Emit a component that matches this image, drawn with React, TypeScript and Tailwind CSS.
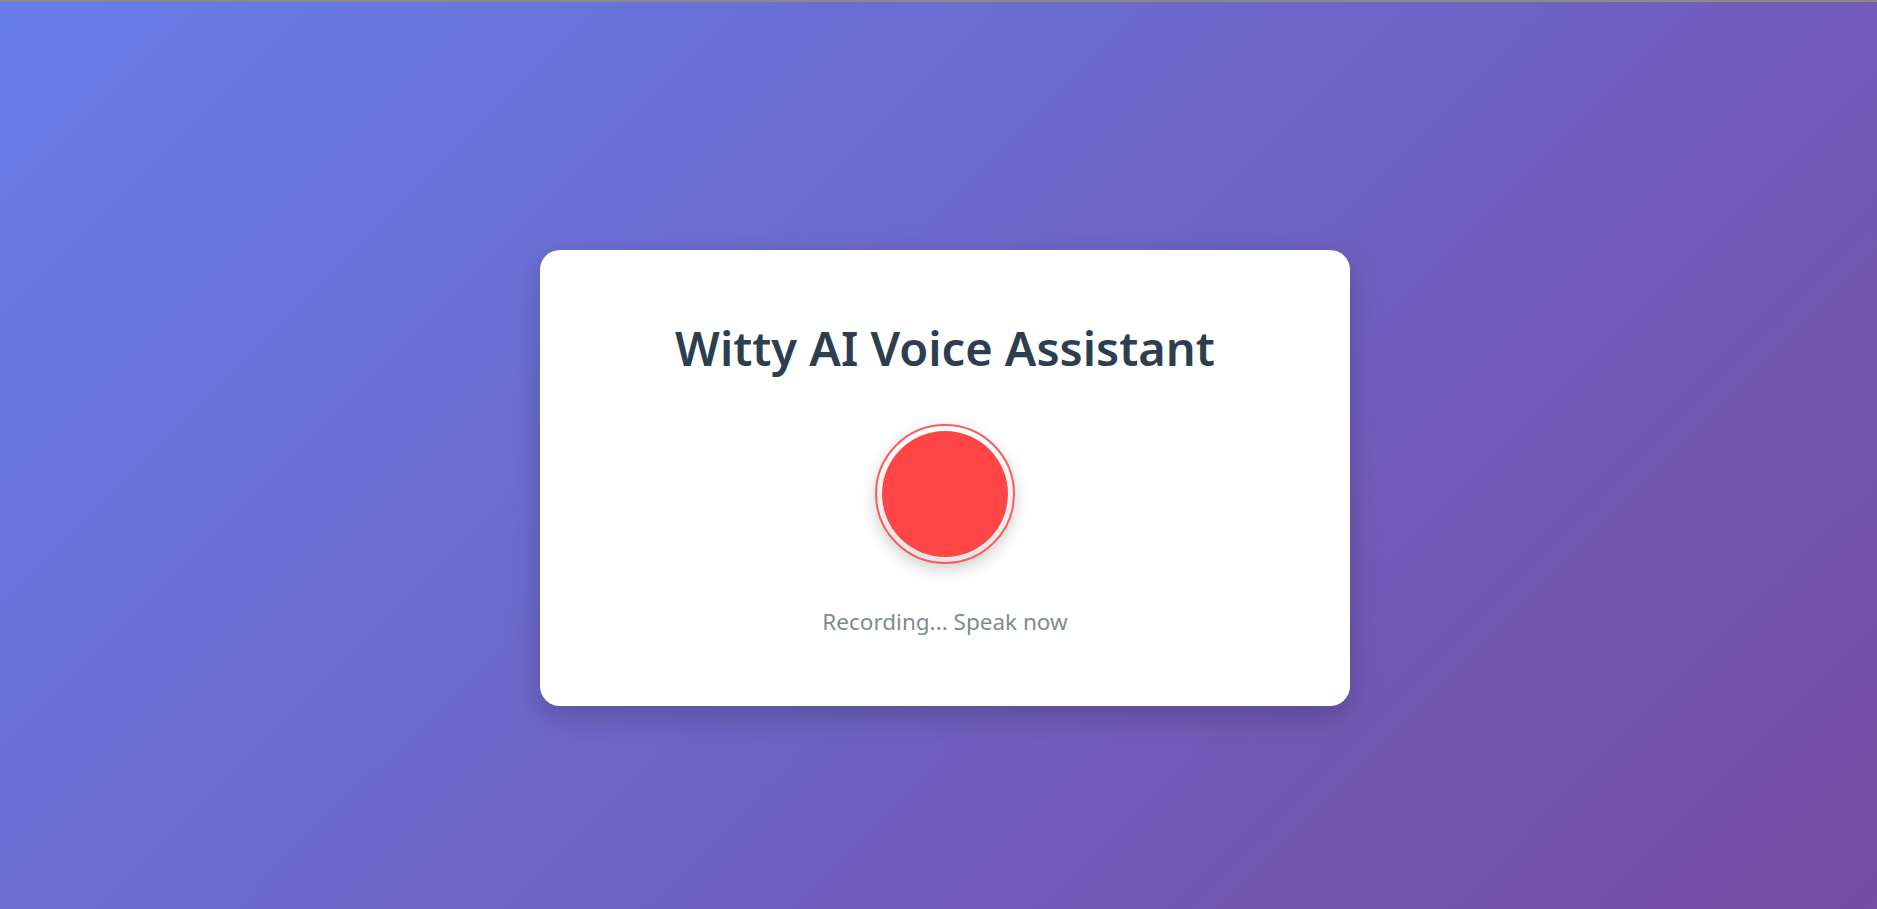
export default function App() {
  return (
    <div
      className="min-h-screen w-full border-t-2 border-[#8a8a8a] bg-[linear-gradient(135deg,#667eea_0%,#764ba2_100%)]"
      style={{ fontFamily: "'Noto Sans', 'Open Sans', sans-serif" }}
    >
      <div className="flex justify-center pl-[13px] pt-[248px]">
        <div className="flex h-[456px] w-[810px] flex-col items-center rounded-[20px] bg-white shadow-[0_10px_30px_rgba(0,0,0,0.2)]">
          {/* Title */}
          <h1 className="mt-[68px] text-[47px] font-semibold leading-[60px] text-[#2c3e50]">
            Witty AI Voice Assistant
          </h1>

          {/* Record button */}
          <div className="mt-[46px] flex h-[140px] w-[140px] items-center justify-center rounded-full border-2 border-[#ff5a5a] bg-[linear-gradient(180deg,#ffffff_0%,#e4e4e4_100%)] shadow-[0_6px_16px_rgba(0,0,0,0.18)]">
            <button className="h-[126px] w-[126px] rounded-full bg-[#ff4545]" />
          </div>

          {/* Status */}
          <p className="mt-[43px] text-[22.5px] leading-[30px] text-[#7f8c8d]">Recording... Speak now</p>
        </div>
      </div>
    </div>
  );
}
